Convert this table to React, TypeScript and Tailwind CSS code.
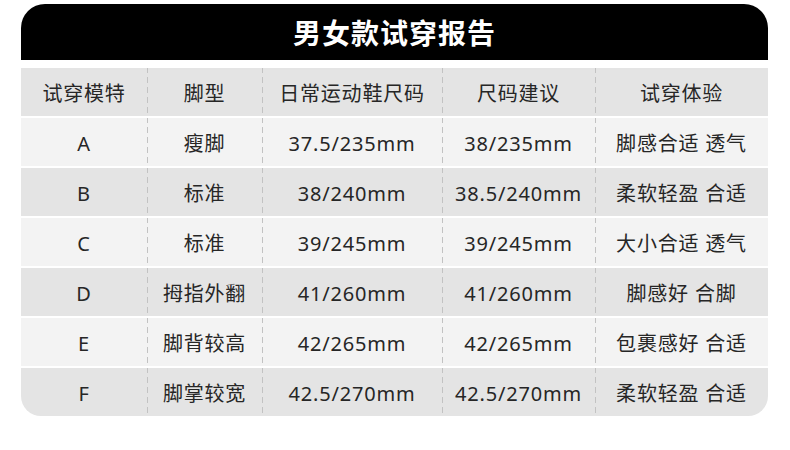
const COLS = ['试穿模特', '脚型', '日常运动鞋尺码', '尺码建议', '试穿体验'];

const ROWS: string[][] = [
  ['A', '瘦脚', '37.5/235mm', '38/235mm', '脚感合适 透气'],
  ['B', '标准', '38/240mm', '38.5/240mm', '柔软轻盈 合适'],
  ['C', '标准', '39/245mm', '39/245mm', '大小合适 透气'],
  ['D', '拇指外翻', '41/260mm', '41/260mm', '脚感好 合脚'],
  ['E', '脚背较高', '42/265mm', '42/265mm', '包裹感好 合适'],
  ['F', '脚掌较宽', '42.5/270mm', '42.5/270mm', '柔软轻盈 合适'],
];

function Row({ cells, shade }: { cells: string[]; shade: boolean }) {
  return (
    <div
      className={
        'grid h-[48px] grid-cols-[126px_115px_180px_153px_173px] ' +
        (shade ? 'bg-[#e4e4e4]' : 'bg-[#f3f3f3]')
      }
    >
      {cells.map((c, i) => (
        <div
          key={i}
          className={
            'flex items-center justify-center pt-[3px] ' +
            (i > 0
              ? 'bg-[linear-gradient(to_bottom,#c2c2c2_60%,transparent_60%)] bg-[length:1px_10px] bg-left bg-repeat-y'
              : '')
          }
        >
          {c}
        </div>
      ))}
    </div>
  );
}

export default function App() {
  return (
    <div
      className="h-[450px] w-[790px] bg-white pt-[4px] text-[20px] tracking-[0.8px] text-[#262626]"
      style={{ fontFamily: '"Noto Sans", "Noto Sans CJK SC", sans-serif' }}
    >
      <div className="ml-[21px] w-[747px]">
        <div className="flex h-[56px] items-center justify-center rounded-t-[24px] bg-black pt-[2px] text-[28px] font-bold tracking-[1px] text-white">
          男女款试穿报告
        </div>
        <div className="mt-[8px] flex flex-col gap-[2px] overflow-hidden rounded-b-[20px]">
          <Row cells={COLS} shade />
          {ROWS.map((r, i) => (
            <Row key={r[0]} cells={r} shade={i % 2 === 1} />
          ))}
        </div>
      </div>
    </div>
  );
}
